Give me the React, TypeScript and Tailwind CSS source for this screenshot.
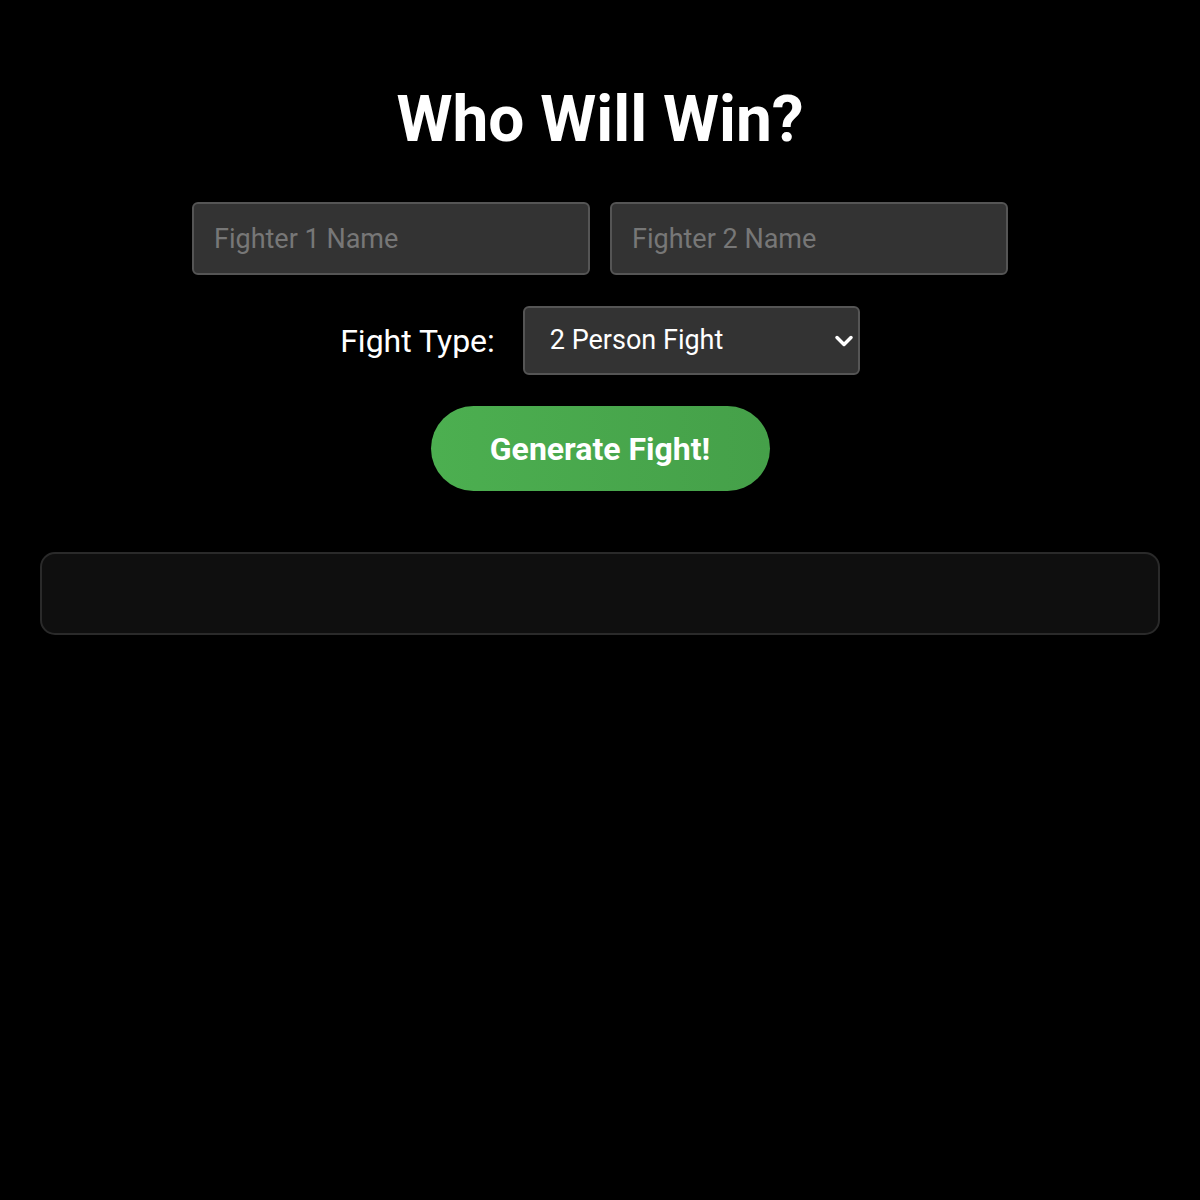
import { useState } from "react";

const App = () => {
  const [fighter1, setFighter1] = useState("");
  const [fighter2, setFighter2] = useState("");
  const [fightType, setFightType] = useState("2");

  return (
    <div className="min-h-screen bg-black text-white font-['Roboto','Liberation_Sans',sans-serif] px-10 pt-[84px]">
      {/* Title */}
      <h1 className="text-center text-[64px] leading-[72px] font-bold">Who Will Win?</h1>

      {/* Fighter names */}
      <div className="mt-[46px] flex justify-center gap-5">
        <input
          value={fighter1}
          onChange={(e) => setFighter1(e.target.value)}
          placeholder="Fighter 1 Name"
          className="w-[398px] h-[73px] rounded-[6px] border-2 border-[#555] bg-[#333] px-[20px] text-[27px] text-white placeholder:text-[#777] outline-none"
        />
        <input
          value={fighter2}
          onChange={(e) => setFighter2(e.target.value)}
          placeholder="Fighter 2 Name"
          className="w-[398px] h-[73px] rounded-[6px] border-2 border-[#555] bg-[#333] px-[20px] text-[27px] text-white placeholder:text-[#777] outline-none"
        />
      </div>

      {/* Fight type */}
      <div className="mt-[31px] flex items-center justify-center gap-[28px]">
        <label className="text-[32px]">Fight Type:</label>
        <div className="relative">
          <select
            value={fightType}
            onChange={(e) => setFightType(e.target.value)}
            className="appearance-none w-[337px] h-[69px] rounded-[6px] border-2 border-[#555] bg-[#333] pl-[25px] pr-10 text-[27px] text-white outline-none"
          >
            <option value="2">2 Person Fight</option>
            <option value="3">3 Person Fight</option>
          </select>
          <svg
            className="pointer-events-none absolute right-[6px] top-1/2 -translate-y-1/2"
            width="20"
            height="14"
            viewBox="0 0 20 14"
            fill="none"
          >
            <path d="M3 3.5 L10 10.5 L17 3.5" stroke="white" strokeWidth="3.5" strokeLinecap="round" strokeLinejoin="round" />
          </svg>
        </div>
      </div>

      {/* Generate button */}
      <div className="mt-[31px] flex justify-center">
        <button className="w-[339px] h-[85px] rounded-full bg-gradient-to-r from-[#4caf50] to-[#45a049] text-[32px] font-bold text-white">
          Generate Fight!
        </button>
      </div>

      {/* Result */}
      <div className="mt-[61px] h-[83px] rounded-[15px] border-2 border-[#2a2a2a] bg-[#0f0f0f]" />
    </div>
  );
};

export default App;
